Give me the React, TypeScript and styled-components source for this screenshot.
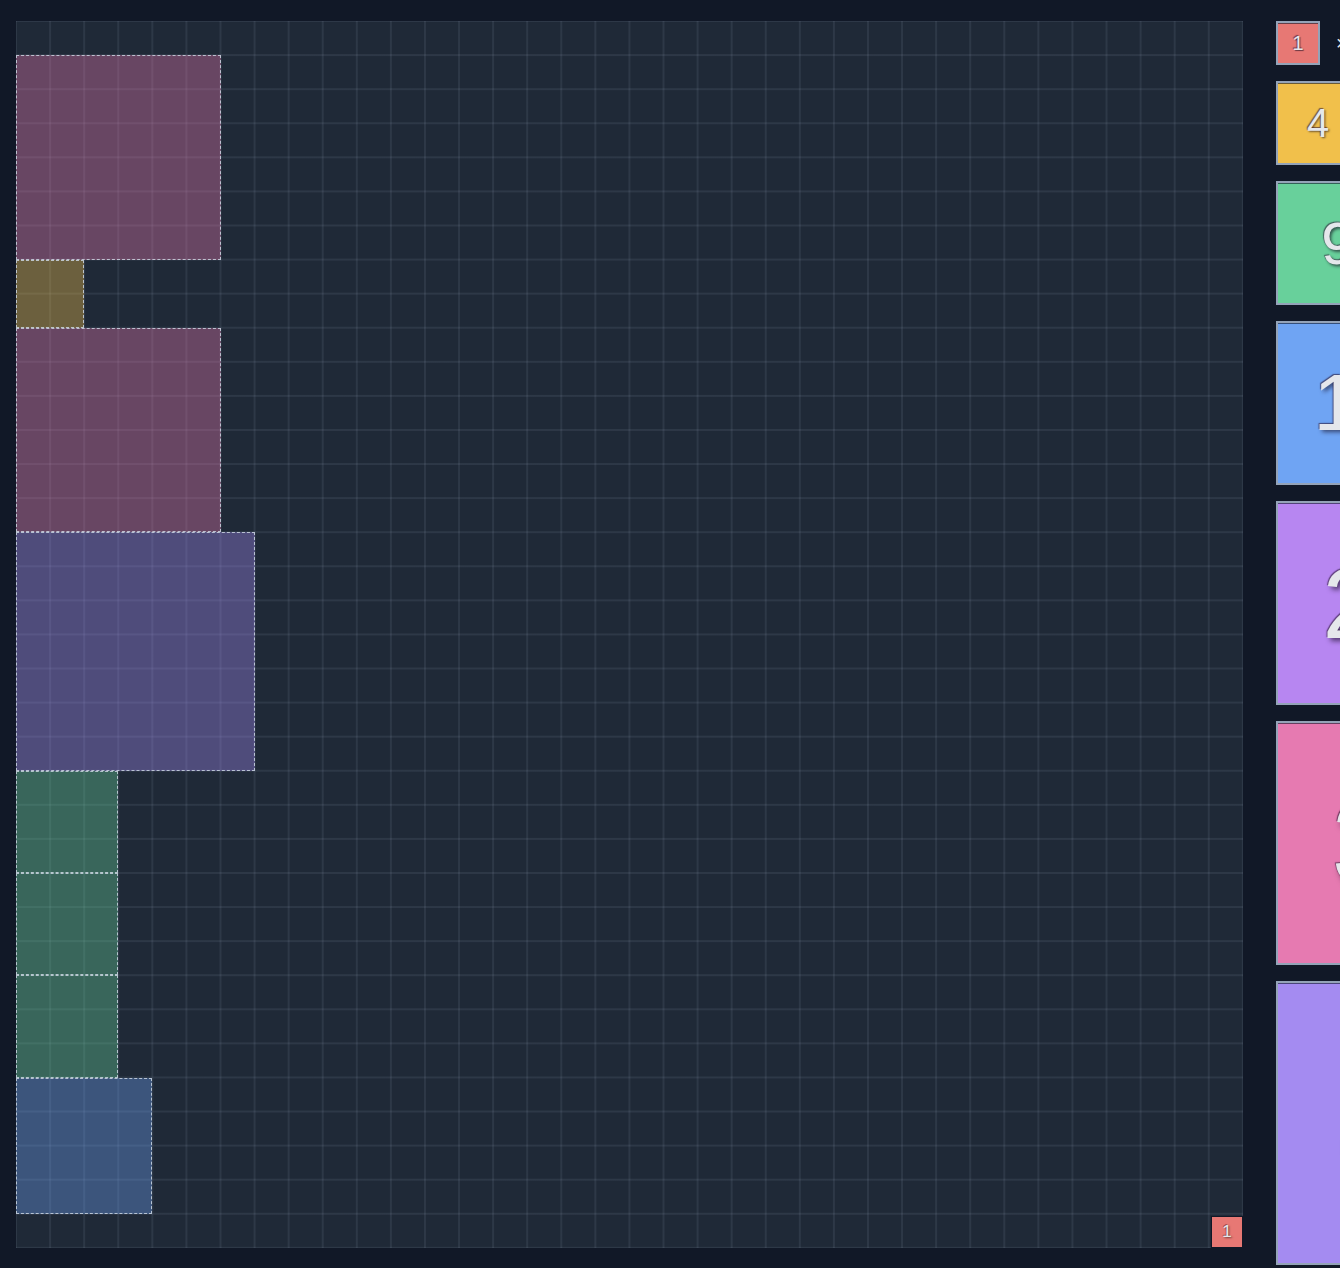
import React from "react";
import styled, { createGlobalStyle } from "styled-components";

const GRID = 36;
const BOARD = 1227;
const CELL = BOARD / GRID;
const UNIT = 40;

const PIECES = [
  { n: 1, color: "231, 120, 116" },
  { n: 2, color: "241, 192, 75" },
  { n: 3, color: "104, 208, 155" },
  { n: 4, color: "111, 164, 243" },
  { n: 5, color: "183, 134, 241" },
  { n: 6, color: "230, 122, 177" },
  { n: 7, color: "164, 139, 241" },
];

const colorOf = (n: number) => PIECES[n - 1].color;

// what is already on the board, in cells
const PLACED = [
  { n: 6, x: 0, y: 1 },
  { n: 2, x: 0, y: 7 },
  { n: 6, x: 0, y: 9 },
  { n: 7, x: 0, y: 15 },
  { n: 3, x: 0, y: 22 },
  { n: 3, x: 0, y: 25 },
  { n: 3, x: 0, y: 28 },
  { n: 4, x: 0, y: 31 },
];

const GlobalStyle = createGlobalStyle`
  html, body {
    margin: 0;
    background: #111827;
    overflow: hidden;
  }
  body {
    font-family: "Liberation Sans", "Noto Sans", Arial, sans-serif;
    color: #e5e7eb;
  }
`;

const Page = styled.main`
  display: flex;
  align-items: flex-start;
  gap: 33px;
  padding: 21px 0 0 16px;
  width: max-content;
`;

const Board = styled.section`
  position: relative;
  flex: none;
  width: ${BOARD}px;
  height: ${BOARD}px;
  background-color: #1f2937;
  background-image: linear-gradient(
      to right,
      transparent calc(100% - 2px),
      rgba(148, 163, 184, 0.12) calc(100% - 2px)
    ),
    linear-gradient(
      to bottom,
      transparent calc(100% - 2px),
      rgba(148, 163, 184, 0.12) calc(100% - 2px)
    );
  background-size: ${CELL}px ${CELL}px;
  background-position: 1px 1px;
`;

const Placed = styled.div<{ $n: number; $x: number; $y: number }>`
  position: absolute;
  box-sizing: border-box;
  left: ${(p) => p.$x * CELL}px;
  top: ${(p) => p.$y * CELL}px;
  width: ${(p) => p.$n * CELL}px;
  height: ${(p) => p.$n * CELL}px;
  background: rgba(${(p) => colorOf(p.$n)}, 0.37);
  border: 1px dashed rgba(203, 213, 225, 0.85);
`;

const Cursor = styled.div<{ $x: number; $y: number }>`
  position: absolute;
  box-sizing: border-box;
  left: ${(p) => p.$x * CELL + 2}px;
  top: ${(p) => p.$y * CELL + 2}px;
  width: ${CELL - 2}px;
  height: ${CELL - 2}px;
  display: flex;
  align-items: center;
  justify-content: center;
  background: rgb(${colorOf(1)});
  border: 1px solid #111827;
  font-size: 17px;
  color: #e5e7eb;
  text-shadow: -1px -1px 0 rgba(0, 0, 0, 0.3), 1px 1px 2px rgba(0, 0, 0, 0.5);
`;

const Tray = styled.aside`
  display: flex;
  flex-direction: column;
  gap: 16px;
  flex: none;
`;

const TrayRow = styled.div`
  display: flex;
  align-items: center;
  gap: 16px;
`;

const Tile = styled.div<{ $n: number }>`
  flex: none;
  width: ${(p) => p.$n * UNIT}px;
  height: ${(p) => p.$n * UNIT}px;
  display: flex;
  align-items: center;
  justify-content: center;
  background: rgb(${(p) => colorOf(p.$n)});
  border: 2px solid #94a3b8;
  box-shadow: inset 0 1px 0 rgba(15, 23, 42, 0.6);
  font-size: ${(p) => p.$n * UNIT * 0.5}px;
  color: #e5e7eb;
  text-shadow: -1px -1px 1px rgba(40, 20, 50, 0.6),
    ${(p) => Math.max(1, p.$n * 0.6)}px ${(p) => Math.max(1, p.$n * 0.6)}px
      ${(p) => p.$n}px rgba(20, 10, 30, 0.6);
`;

const Count = styled.span`
  font-size: 20px;
  color: #e5e7eb;
  white-space: nowrap;
`;

export default function App() {
  const counts: Record<number, number> = {};
  PLACED.forEach((p) => (counts[p.n] = (counts[p.n] || 0) + 1));

  return (
    <>
      <GlobalStyle />
      <Page>
        <Board>
          {PLACED.map((p, i) => (
            <Placed key={i} $n={p.n} $x={p.x} $y={p.y} />
          ))}
          <Cursor $x={35} $y={35}>1</Cursor>
        </Board>
        <Tray>
          {PIECES.map((piece) => (
            <TrayRow key={piece.n}>
              <Tile $n={piece.n}>{piece.n * piece.n}</Tile>
              <Count>× {counts[piece.n] || 0}</Count>
            </TrayRow>
          ))}
        </Tray>
      </Page>
    </>
  );
}
